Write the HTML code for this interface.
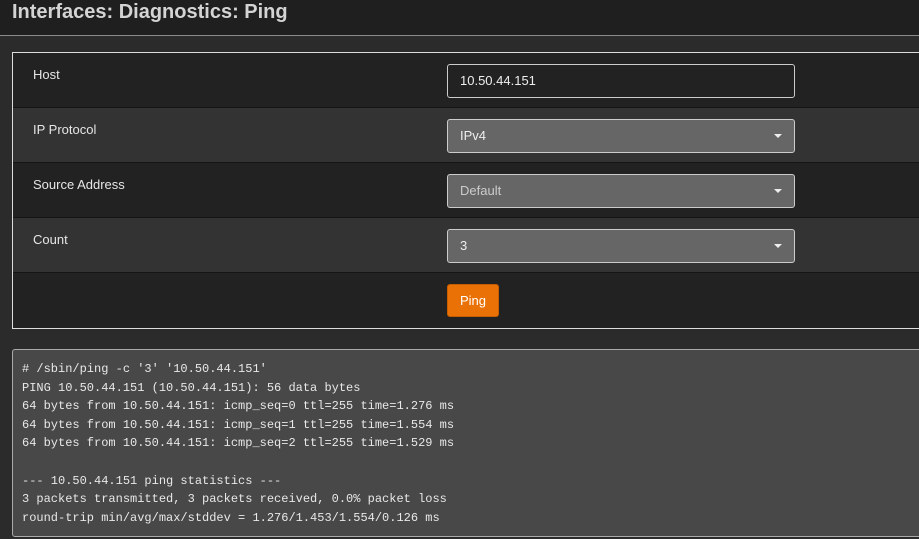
<!DOCTYPE html>
<html><head><meta charset="utf-8"><style>
*{box-sizing:border-box}
body{margin:0;width:919px;height:539px;overflow:hidden;background:#2b2b2b;font-family:"Liberation Sans",sans-serif;position:relative}
.hdr{position:absolute;left:0;top:0;width:919px;height:36px;background:#1f1f1f;border-bottom:1px solid #8a8a8a}
.hdr h1{margin:0;position:absolute;left:12px;top:0;font-size:20px;font-weight:bold;color:#d4d4d4;line-height:24px}
.panel{position:absolute;left:12px;top:52px;width:920px;height:277px;border:1px solid #ddd;background:#222}
.row{position:absolute;left:0;width:100%;height:55px;border-bottom:1px solid #151515}
.row.a{background:#222}.row.b{background:#333}
.lbl{position:absolute;left:20px;top:14px;font-size:13px;color:#e6e6e6}
.inp{position:absolute;left:434px;top:11px;width:348px;height:34px;border:1px solid #ccc;border-radius:3px;font-size:13px;color:#eee;padding:0 12px;line-height:32px}
.inp.t{background:#222}.inp.s{background:#666}
.car{position:absolute;right:12px;top:14px;width:0;height:0;border-left:4px solid transparent;border-right:4px solid transparent;border-top:4px solid #eee}
.btn{position:absolute;left:434px;top:11px;width:52px;height:33px;background:#ea7105;border:1px solid #c65e00;border-radius:3px;color:#fff;font-size:13px;text-align:center;line-height:31px}
pre{position:absolute;left:12px;top:349px;width:920px;height:188px;margin:0;background:#484848;border:1px solid #aaa;border-radius:3px;padding:10px 9px;font-family:"Liberation Mono",monospace;font-size:12px;line-height:18.6px;color:#e8e8e8}
</style></head><body>
<div class="hdr"><h1>Interfaces: Diagnostics: Ping</h1></div>
<div class="panel">
<div class="row a" style="top:0"><div class="lbl">Host</div><div class="inp t">10.50.44.151</div></div>
<div class="row b" style="top:55px"><div class="lbl">IP Protocol</div><div class="inp s">IPv4<div class="car"></div></div></div>
<div class="row a" style="top:110px"><div class="lbl">Source Address</div><div class="inp s" style="color:#ccc">Default<div class="car"></div></div></div>
<div class="row b" style="top:165px"><div class="lbl">Count</div><div class="inp s">3<div class="car"></div></div></div>
<div class="row a" style="top:220px;border-bottom:none"><div class="btn">Ping</div></div>
</div>
<pre># /sbin/ping -c '3' '10.50.44.151'
PING 10.50.44.151 (10.50.44.151): 56 data bytes
64 bytes from 10.50.44.151: icmp_seq=0 ttl=255 time=1.276 ms
64 bytes from 10.50.44.151: icmp_seq=1 ttl=255 time=1.554 ms
64 bytes from 10.50.44.151: icmp_seq=2 ttl=255 time=1.529 ms

--- 10.50.44.151 ping statistics ---
3 packets transmitted, 3 packets received, 0.0% packet loss
round-trip min/avg/max/stddev = 1.276/1.453/1.554/0.126 ms</pre>
</body></html>
